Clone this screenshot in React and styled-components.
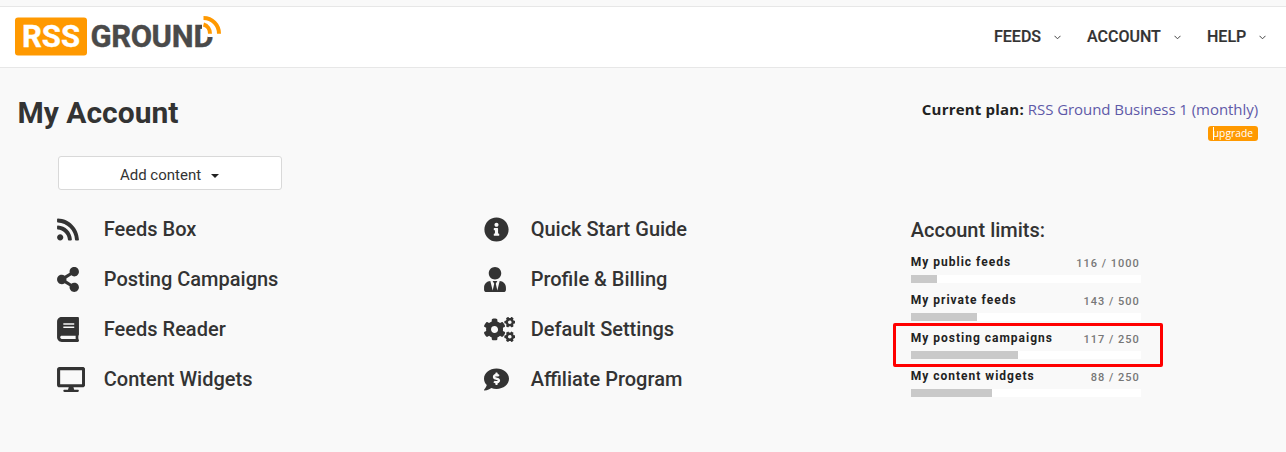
import React from "react";
import styled, { createGlobalStyle } from "styled-components";
import {
  FaRss,
  FaShareAlt,
  FaBook,
  FaDesktop,
  FaInfoCircle,
  FaUserTie,
  FaCogs,
  FaCommentDollar,
} from "react-icons/fa";

const menu = [
  { label: "FEEDS", width: 67 },
  { label: "ACCOUNT", width: 94 },
  { label: "HELP", width: 59 },
];

const contentLinks = [
  { label: "Feeds Box", icon: FaRss, iconWidth: 22 },
  { label: "Posting Campaigns", icon: FaShareAlt, iconWidth: 22 },
  { label: "Feeds Reader", icon: FaBook, iconWidth: 22 },
  { label: "Content Widgets", icon: FaDesktop, iconWidth: 28.2 },
];

const accountLinks = [
  { label: "Quick Start Guide", icon: FaInfoCircle, iconWidth: 25 },
  { label: "Profile & Billing", icon: FaUserTie, iconWidth: 22 },
  { label: "Default Settings", icon: FaCogs, iconWidth: 31.3 },
  { label: "Affiliate Program", icon: FaCommentDollar, iconWidth: 25 },
];

const limits = [
  { label: "My public feeds", used: 116, total: 1000 },
  { label: "My private feeds", used: 143, total: 500 },
  { label: "My posting campaigns", used: 117, total: 250, marked: true },
  { label: "My content widgets", used: 88, total: 250 },
];

const Logo = () => (
  <LogoSvg width="210" height="44" viewBox="14 14 210 44">
    <rect x="15" y="17.5" width="72" height="38" rx="3" fill="#ff9900" />
    <LogoText x="22" y="47" textLength="58" fill="#fff" stroke="#fff">
      RSS
    </LogoText>
    <LogoText x="90.5" y="47" textLength="103" fill="#4a4a4a" stroke="#4a4a4a">
      GROUN
    </LogoText>
    <LogoText x="193.6" y="47" fill="#4a4a4a" stroke="#4a4a4a">
      D
    </LogoText>
    <path d="M202 14H224V37H208L202 34z" fill="#fff" />
    <path
      d="M203.500 18A15.500 15.500 0 0 1 219 33.800M203.500 24.500A8.500 9.300 0 0 1 210 33.800"
      fill="none"
      stroke="#ff9900"
      strokeWidth="4"
    />
  </LogoSvg>
);

const LinkList = ({ links }) => (
  <Links>
    {links.map(({ label, icon: Icon, iconWidth }) => (
      <LinkRow key={label}>
        <IconBox $iconWidth={iconWidth}>
          <Icon />
        </IconBox>
        {label}
      </LinkRow>
    ))}
  </Links>
);

const App = () => {
  return (
    <>
      <GlobalStyle />
      <Header>
        <Logo />
        <Nav>
          {menu.map((item) => (
            <NavItem key={item.label} $width={item.width}>
              {item.label}
              <Chevron width="7" height="5" viewBox="0 0 7 5">
                <path d="M0.500 0.800L3.500 3.800L6.500 0.800" />
              </Chevron>
            </NavItem>
          ))}
        </Nav>
      </Header>
      <TitleRow>
        <Title>My Account</Title>
        <Plan>
          <PlanText>
            <PlanLabel>Current plan:</PlanLabel>{" "}
            <PlanLink>RSS Ground Business 1 (monthly)</PlanLink>
          </PlanText>
          <Upgrade>
            <Caret />
            upgrade
          </Upgrade>
        </Plan>
      </TitleRow>
      <AddButton>
        Add content
        <Arrow />
      </AddButton>
      <Columns>
        <LinkList links={contentLinks} />
        <LinkList links={accountLinks} />
        <Limits>
          <LimitsTitle>Account limits:</LimitsTitle>
          {limits.map(({ label, used, total, marked }) => (
            <Limit key={label}>
              <LimitHead>
                <LimitName>{label}</LimitName>
                <LimitCount>
                  {used} / {total}
                </LimitCount>
              </LimitHead>
              <Track>
                <Fill style={{ width: `${(used / total) * 100}%` }} />
              </Track>
              {marked && <Marker />}
            </Limit>
          ))}
        </Limits>
      </Columns>
    </>
  );
};

export default App;

const GlobalStyle = createGlobalStyle`
  * {
    box-sizing: border-box;
  }

  body {
    margin: 0;
    background: #f9f9f9;
    color: #333;
    font-family: Roboto, sans-serif;
    overflow: hidden;
  }
`;

const Header = styled.header`
  display: flex;
  justify-content: space-between;
  height: 62px;
  margin-top: 6px;
  padding: 7px 20px 0 14px;
  background: #fff;
  border-top: 1px solid #e7e7e7;
  border-bottom: 1px solid #e7e7e7;
`;

const LogoSvg = styled.svg`
  display: block;
`;

const LogoText = styled.text`
  font-family: Roboto, sans-serif;
  font-size: 31px;
  font-weight: 700;
  stroke-width: 0.4px;
`;

const Nav = styled.nav`
  display: flex;
  gap: 26px;
  height: 44px;
`;

const NavItem = styled.div`
  display: flex;
  justify-content: space-between;
  align-items: center;
  width: ${(props) => props.$width}px;
  font-size: 16px;
  font-weight: 500;
  -webkit-text-stroke: 0.2px #333;
`;

const Chevron = styled.svg`
  margin-top: 3px;
  fill: none;
  stroke: #444;
  stroke-width: 1;
`;

const TitleRow = styled.div`
  display: flex;
  justify-content: space-between;
  height: 88px;
  padding: 27px 28px 0 17.500px;
`;

const Title = styled.h1`
  margin: 0;
  font-size: 30px;
  line-height: 36px;
  font-weight: 700;
`;

const Plan = styled.div`
  display: flex;
  flex-direction: column;
  align-items: flex-end;
  font-family: "Open Sans", sans-serif;
`;

const PlanText = styled.div`
  margin-top: 2px;
  font-size: 15px;
  line-height: 24px;
  color: #222;
`;

const PlanLabel = styled.b`
  letter-spacing: 0.200px;
`;

const PlanLink = styled.span`
  color: #5f5aa8;
  letter-spacing: -0.060px;
`;

const Upgrade = styled.div`
  display: flex;
  align-items: center;
  height: 15px;
  margin-top: 5px;
  padding: 0 5px 1px 5px;
  border-radius: 3px;
  background: #ff9900;
  color: #fff;
  font-size: 10.300px;
`;

const Caret = styled.span`
  width: 1px;
  height: 13px;
  margin-right: -1px;
  background: #fff;
`;

const AddButton = styled.div`
  display: flex;
  justify-content: center;
  align-items: center;
  width: 224px;
  height: 34px;
  margin-left: 58px;
  padding: 3px 1px 0 0;
  background: #fff;
  border: 1px solid #d9d9d9;
  border-radius: 3px;
  font-size: 15px;
`;

const Arrow = styled.span`
  margin: 2px 0 0 10px;
  border: 4px solid transparent;
  border-top-color: #222;
  border-bottom: 0;
`;

const Columns = styled.main`
  display: grid;
  grid-template-columns: 426.875px 426.875px 230px;
  padding: 14px 0 0 57px;
`;

const Links = styled.div`
  display: flex;
  flex-direction: column;
`;

const LinkRow = styled.div`
  display: flex;
  align-items: center;
  height: 50px;
  font-size: 20px;
  font-weight: 500;
`;

const IconBox = styled.span`
  display: flex;
  width: 46.800px;

  svg {
    width: ${(props) => props.$iconWidth}px;
    height: 25px;
  }
`;

const Limits = styled.section`
  width: 230px;
`;

const LimitsTitle = styled.h2`
  margin: 14px 0 10px;
  font-size: 20px;
  line-height: 24px;
  font-weight: 500;
`;

const Limit = styled.div`
  position: relative;
  height: 38px;
`;

const LimitHead = styled.div`
  display: flex;
  justify-content: space-between;
  height: 23px;
  padding: 2px 1px 0 0;
`;

const LimitName = styled.span`
  font-size: 12px;
  line-height: 16px;
  font-weight: 700;
  letter-spacing: 1px;
  color: #222;
`;

const LimitCount = styled.span`
  padding-top: 2px;
  font-size: 11px;
  line-height: 16px;
  font-weight: 500;
  letter-spacing: 1px;
  color: #777;
`;

const Track = styled.div`
  height: 8px;
  background: #fff;
`;

const Fill = styled.div`
  height: 100%;
  background: #c9c9c9;
`;

// Outline drawn over the list around the highlighted limit
const Marker = styled.div`
  position: absolute;
  top: -5px;
  left: -17.750px;
  width: 270px;
  height: 44px;
  border: 3px solid #ff0000;
  border-radius: 2px;
`;
